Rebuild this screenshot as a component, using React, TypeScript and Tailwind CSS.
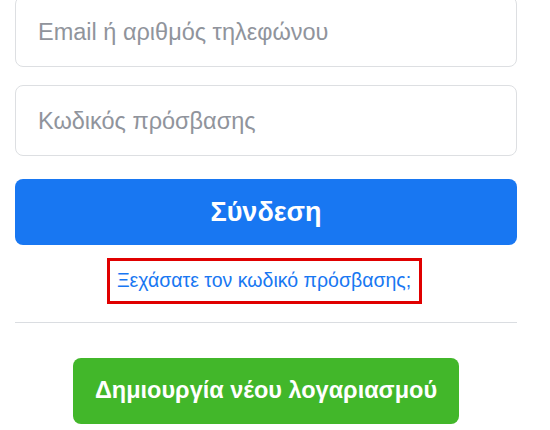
export default function App() {
  return (
    <div className="min-h-screen bg-white font-['Liberation_Sans',Arial,sans-serif]">
      <div className="px-[15px] -mt-[4px] w-[532px]">
        <form className="flex flex-col">
          <input
            type="text"
            placeholder="Email ή αριθμός τηλεφώνου"
            className="h-[71px] w-full rounded-[8px] border border-[#dddfe2] bg-white pl-[22px] pr-4 pt-[1px] text-[23.5px] text-[#1c1e21] placeholder:text-[#90949c] outline-none"
          />
          <input
            type="password"
            placeholder="Κωδικός πρόσβασης"
            className="mt-[18px] h-[71px] w-full rounded-[8px] border border-[#dddfe2] bg-white pl-[22px] pr-4 pt-[1px] text-[23.5px] text-[#1c1e21] placeholder:text-[#90949c] outline-none"
          />
          <button
            type="button"
            className="mt-[23px] h-[66px] w-full rounded-[8px] bg-[#1877f2] text-[27px] font-bold text-white"
          >
            Σύνδεση
          </button>
        </form>

        <div className="mt-[13px] flex justify-center">
          <a
            href="#"
            className="-ml-[4px] flex h-[46px] w-[315px] items-center justify-center border-[3px] border-[#e00000] text-[19.5px] text-[#1877f2]"
          >
            Ξεχάσατε τον κωδικό πρόσβασης;
          </a>
        </div>

        <div className="mt-[18px] h-px bg-[#dadde1]" />

        <div className="mt-[35px] flex justify-center">
          <button
            type="button"
            className="h-[66px] w-[386px] rounded-[8px] bg-[#42b72a] text-[23.5px] font-bold text-white"
          >
            Δημιουργία νέου λογαριασμού
          </button>
        </div>
      </div>
    </div>
  );
}
